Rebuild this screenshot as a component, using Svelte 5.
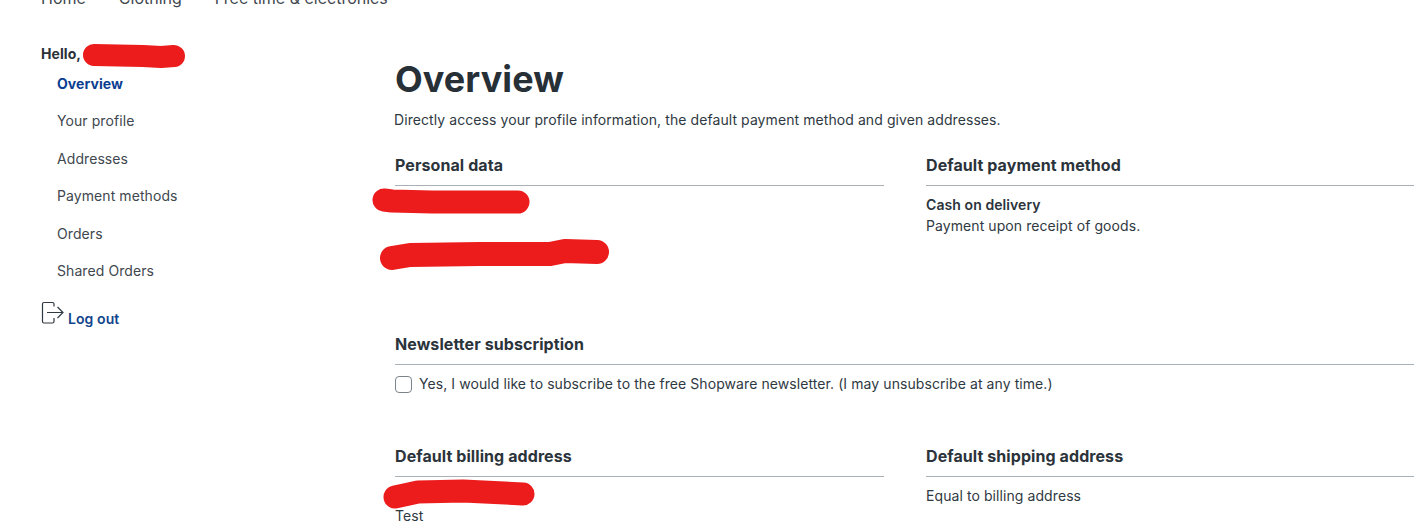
<script>
    let navItems = ["Overview", "Your profile", "Addresses", "Payment methods", "Orders", "Shared Orders"];
    let crumbs = ["Home", "Clothing", "Free time & electronics"];
</script>

<div class="page">

    <nav class="crumbs">
        {#each crumbs as crumb}
            <span>{crumb}</span>
        {/each}
    </nav>

    <div class="layout">

        <aside class="sidebar">
            <div class="hello">
                Hello,
                <svg class="scribble s-name" viewBox="0 0 104 24"><path d="M11 10 L60 11 L78 12 L91 11" /></svg>
            </div>
            <ul class="menu">
                {#each navItems as item, i}
                    <li class:active={i === 0}>{item}</li>
                {/each}
            </ul>
            <div class="logout">
                <svg class="logout-icon" width="24" height="24" viewBox="0 0 24 24">
                    <path d="M13 5.500 V3 A1.500 1.500 0 0 0 11.500 1.500 H3 A1.500 1.500 0 0 0 1.500 3 V20.500 A1.500 1.500 0 0 0 3 22 H11.500 A1.500 1.500 0 0 0 13 20.500 V17" />
                    <path d="M6 11.500 H22 M16.500 6 L22 11.500 L16.500 17" />
                </svg>
                <span>Log out</span>
            </div>
        </aside>

        <main class="content">
            <h1>Overview</h1>
            <p class="intro">Directly access your profile information, the default payment method and given addresses.</p>

            <div class="columns">
                <section class="block personal">
                    <h2>Personal data</h2>
                    <svg class="scribble s-data1" viewBox="0 0 160 26"><path d="M12 11 L20 12 L60 13 L146 13" /></svg>
                    <svg class="scribble s-data2" viewBox="0 0 232 32"><path d="M12 18 L30 15 L100 14 L170 14 L185 11 L217 12" /></svg>
                </section>
                <section class="block">
                    <h2>Default payment method</h2>
                    <div class="strong">Cash on delivery</div>
                    <div>Payment upon receipt of goods.</div>
                </section>
            </div>

            <section class="block newsletter">
                <h2>Newsletter subscription</h2>
                <label class="check">
                    <input type="checkbox" />
                    <span>Yes, I would like to subscribe to the free Shopware newsletter. (I may unsubscribe at any time.)</span>
                </label>
            </section>

            <div class="columns">
                <section class="block">
                    <h2>Default billing address</h2>
                    <svg class="scribble s-bill" viewBox="0 0 154 28"><path d="M12 17 L35 12 L80 11 L140 14" /></svg>
                    <div class="test">Test</div>
                </section>
                <section class="block">
                    <h2>Default shipping address</h2>
                    <div>Equal to billing address</div>
                </section>
            </div>
        </main>

    </div>
</div>

<style>
:global(body) {
    margin: 0;
    background: #fff;
}

.page {
    height: 522px;
    overflow: hidden;
    box-sizing: border-box;
    font-family: Inter, "Liberation Sans", sans-serif;
    font-size: 14px;
    line-height: 21px;
    letter-spacing: 0.08px;
    color: #2f3942;
}

.crumbs {
    display: flex;
    gap: 33px;
    height: 59px;
    margin-top: -14px;
    padding-left: 41px;
    font-size: 16px;
    line-height: 24px;
    letter-spacing: 0;
    color: #3f474f;
}

.layout {
    display: flex;
    padding-left: 41px;
    padding-right: 14px;
}

.sidebar {
    width: 354px;
    flex: none;
}

.hello {
    position: relative;
    font-weight: 700;
    color: #2b3136;
    line-height: 18px;
}

.menu {
    list-style: none;
    margin: 9px 0 0;
    padding: 0 0 0 16px;
}

.menu li {
    height: 37.4px;
    line-height: 24px;
    color: #40474e;
}

.menu li.active {
    font-weight: 700;
    color: #0b3e91;
}

.logout {
    display: flex;
    align-items: flex-end;
    gap: 3px;
    margin-top: 4.6px;
    font-weight: 600;
    color: #12448c;
}

.logout span {
    line-height: 17px;
}

.logout-icon {
    margin-bottom: 2px;
    fill: none;
    stroke: #2f3942;
    stroke-width: 1.2;
}

.content {
    flex: 1;
    min-width: 0;
}

h1 {
    margin: 0;
    padding-top: 14px;
    font-size: 36px;
    line-height: 40px;
    font-weight: 700;
    color: #272f37;
}

.intro {
    margin: 10px 0 -1px -1px;
    line-height: 21px;
}

.columns {
    display: grid;
    grid-template-columns: 489px 1fr;
    gap: 42px;
    margin-top: 25px;
}

.block {
    position: relative;
}

.personal {
    height: 179px;
}

h2 {
    margin: 0 0 8px;
    padding-bottom: 8px;
    border-bottom: 1px solid #a9b0b6;
    font-size: 16px;
    line-height: 23px;
    font-weight: 700;
    color: #2b333b;
}

.strong {
    font-weight: 600;
    color: #2b333b;
}

.newsletter {
    height: 87px;
}

.check {
    display: flex;
    align-items: center;
    gap: 7px;
    margin-top: 8px;
}

.check input {
    appearance: none;
    width: 17px;
    height: 17px;
    margin: 2px 0 0;
    border: 1px solid #7c848b;
    border-radius: 4px;
    background: #fff;
}

.test {
    margin-top: 28px;
}

.scribble {
    position: absolute;
    fill: none;
    stroke: #ec1c1c;
    stroke-linecap: round;
    stroke-linejoin: round;
    overflow: visible;
}

.s-name {
    left: 42px;
    top: 0;
    width: 104px;
    height: 24px;
    stroke-width: 22px;
}

.s-data1 {
    left: -23px;
    top: 35px;
    width: 160px;
    height: 26px;
    stroke-width: 23px;
}

.s-data2 {
    left: -15px;
    top: 86px;
    width: 232px;
    height: 32px;
    stroke-width: 24px;
}

.s-bill {
    left: -12px;
    top: 35px;
    width: 154px;
    height: 28px;
    stroke-width: 23px;
}
</style>
